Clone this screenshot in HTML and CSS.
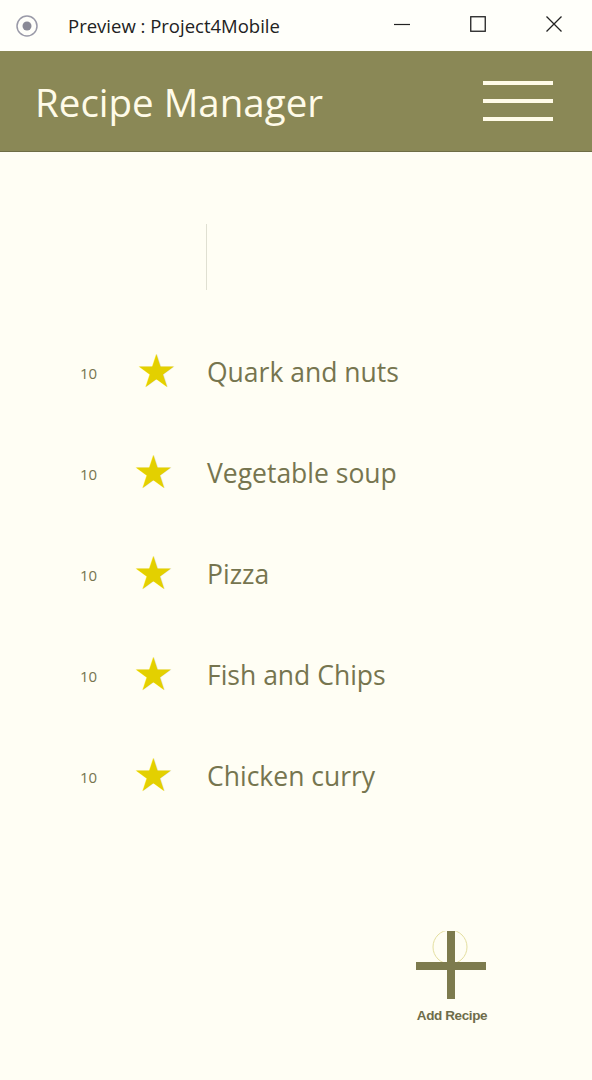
FILE: index.html
```html
<!DOCTYPE html>
<html>
<head>
<meta charset="utf-8">
<link rel="stylesheet" href="styles.css">
</head>
<body>
<div class="window">
  <div class="titlebar">
    <svg class="app-icon" width="24" height="24" viewBox="0 0 24 24"><circle cx="12" cy="12" r="10" fill="none" stroke="#9a9aa8" stroke-width="1.5"/><circle cx="12" cy="12" r="4.5" fill="#8a8a96"/></svg>
    <span class="win-title">Preview : Project4Mobile</span>
    <div class="win-controls">
      <svg width="16" height="16" viewBox="0 0 16 16"><line x1="0" y1="8.5" x2="16" y2="8.5" stroke="#222" stroke-width="1.2"/></svg>
      <svg width="16" height="16" viewBox="0 0 16 16"><rect x="0.75" y="0.75" width="14.5" height="14.5" fill="none" stroke="#222" stroke-width="1.3"/></svg>
      <svg width="16" height="16" viewBox="0 0 16 16"><path d="M0.5 0.5 L15.5 15.5 M15.5 0.5 L0.5 15.5" stroke="#222" stroke-width="1.3"/></svg>
    </div>
  </div>
  <header class="app-header">
    <h1 class="app-title">Recipe Manager</h1>
    <div class="hamburger"><span></span><span></span><span></span></div>
  </header>
  <main class="content">
    <div class="spacer"><div class="caret"></div></div>
    <ul class="recipes">
      <li class="recipe"><span class="count">10</span><span class="star star-a">★</span><span class="name">Quark and nuts</span></li>
      <li class="recipe"><span class="count">10</span><span class="star">★</span><span class="name">Vegetable soup</span></li>
      <li class="recipe"><span class="count">10</span><span class="star">★</span><span class="name">Pizza</span></li>
      <li class="recipe"><span class="count">10</span><span class="star">★</span><span class="name">Fish and Chips</span></li>
      <li class="recipe"><span class="count">10</span><span class="star">★</span><span class="name">Chicken curry</span></li>
    </ul>
    <div class="add-area">
      <button class="add-btn">
        <svg width="72" height="72" viewBox="0 0 72 72"><circle cx="34" cy="16" r="17" fill="none" stroke="#e4dfa0" stroke-width="1"/><rect x="31" y="0" width="8" height="68" fill="#7d7b4e"/><rect x="0" y="31" width="70" height="8" fill="#7d7b4e"/></svg>
        <span class="add-label">Add Recipe</span>
      </button>
    </div>
  </main>
</div>
</body>
</html>
```
FILE: styles.css
```css
* { box-sizing: border-box; }
html, body { margin: 0; padding: 0; }
body {
  width: 592px;
  height: 1080px;
  background: #fffef4;
  font-family: "Open Sans", "Noto Sans", sans-serif;
  overflow: hidden;
}
.window { display: flex; flex-direction: column; height: 1080px; }
.titlebar {
  height: 51px;
  background: #fffffa;
  display: flex;
  align-items: center;
  padding-left: 15px;
}
.app-icon { flex: none; }
.win-title {
  margin-left: 29px;
  font-size: 18.5px;
  color: #222;
  letter-spacing: 0;
  margin-top: -1px;
}
.win-controls {
  margin-left: auto;
  display: flex;
  gap: 60px;
  padding-right: 30px;
  margin-top: -4px;
}
.app-header {
  height: 101px;
  background: #8a8856;
  border-bottom: 1px solid #6e6d45;
  display: flex;
  align-items: center;
  padding: 0 39px 0 35px;
}
.app-title {
  margin: 0;
  font-weight: 400;
  font-size: 38.5px;
  color: #fffbe8;
  letter-spacing: 0;
  margin-top: 2px;
}
.hamburger {
  margin-left: auto;
  width: 70px;
  display: flex;
  flex-direction: column;
  gap: 14px;
}
.hamburger span { display: block; height: 4px; background: #fffbe8; }
.content { flex: 1; display: flex; flex-direction: column; }
.spacer { height: 170px; padding: 72px 0 0 206px; }
.caret { width: 1px; height: 66px; background: #e0e0d2; }
.recipes { list-style: none; margin: 0; padding: 0; }
.recipe {
  height: 101.2px;
  display: flex;
  align-items: center;
  color: #76754f;
}
.count { width: 133px; padding-left: 80px; font-size: 15px; }
.star {
  width: 74px;
  color: #e3d000;
  font-family: "DejaVu Sans", sans-serif;
  font-size: 46px;
  line-height: 1;
  margin-top: -4px;
}
.star-a { padding-left: 3px; }
.name { font-size: 26.5px; letter-spacing: 0; margin-top: -2px; }
.add-area { display: flex; justify-content: flex-end; padding: 103px 104px 0 0; }
.add-btn {
  background: none;
  border: 0;
  padding: 0;
  display: flex;
  flex-direction: column;
  align-items: center;
  cursor: pointer;
}
.add-label {
  margin-top: 5px;
  font-family: "Liberation Sans", Arial, sans-serif;
  font-weight: 700;
  font-size: 13.5px;
  color: #6e6d4a;
  letter-spacing: -0.4px;
}
```
